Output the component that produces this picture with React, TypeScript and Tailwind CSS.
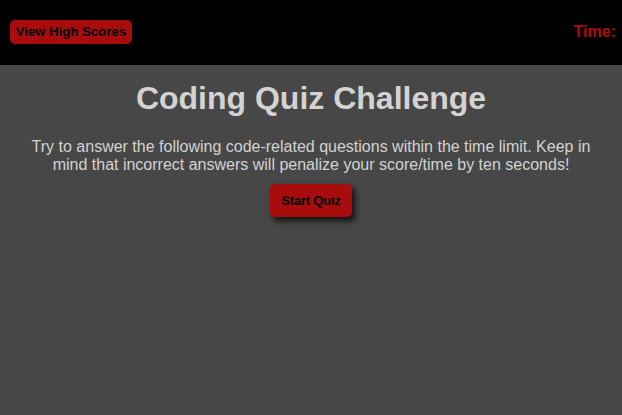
export default function App() {
  return (
    <div className="min-h-[415px] bg-[#474747] font-['Liberation_Sans',Arial,sans-serif] overflow-hidden">
      <header className="h-[65px] bg-black flex items-center justify-between pl-[10px] overflow-hidden">
        <button className="h-[24px] w-[122px] rounded-[5px] bg-[#a80c0c] text-black text-[13px] font-bold leading-none mt-[-2px] tracking-[0.1px]">
          View High Scores
        </button>
        <div className="text-[#b00c0c] font-bold text-[16px] mr-[6px] whitespace-nowrap mt-[-2px]">Time:</div>
      </header>
      <main className="flex flex-col items-center text-center">
        <h1 className="mt-[15px] text-[32px] leading-[37px] font-bold text-[#d3d3d3]">Coding Quiz Challenge</h1>
        <p className="mt-[21px] px-[30px] text-[16px] leading-[18px] text-[#d3d3d3]">
          Try to answer the following code-related questions within the time limit. Keep in mind that incorrect answers will penalize your score/time by ten seconds!
        </p>
        <button className="mt-[10px] w-[82px] h-[33px] rounded-[5px] bg-[#a80c0c] text-black text-[13px] font-bold shadow-[3px_4px_6px_rgba(0,0,0,0.8)] tracking-[-0.2px]">
          Start Quiz
        </button>
      </main>
    </div>
  );
}
